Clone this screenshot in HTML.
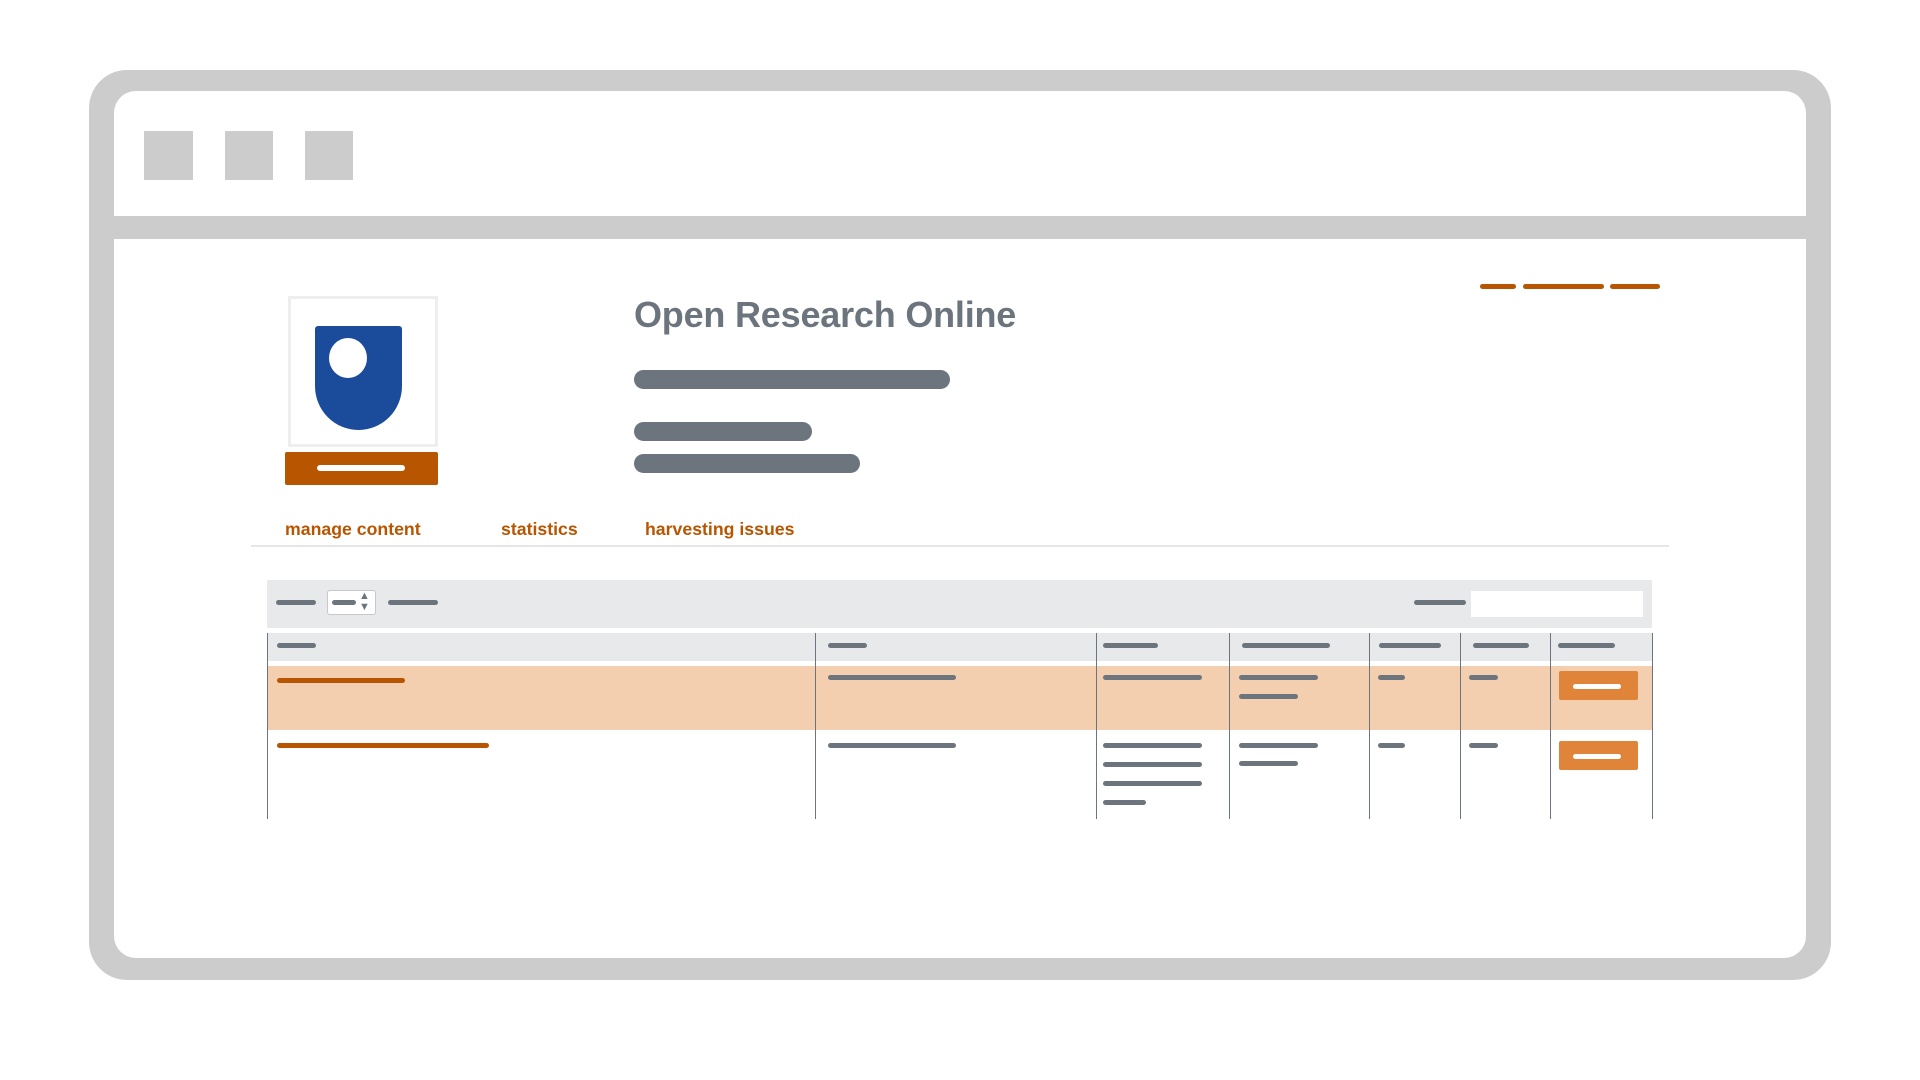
<!DOCTYPE html>
<html><head><meta charset="utf-8"><style>
*{margin:0;padding:0;box-sizing:border-box}
body{width:1920px;height:1080px;background:#fff;position:relative;overflow:hidden;font-family:"Liberation Sans",Arial,sans-serif}
.a{position:absolute}
.d{position:absolute;height:5px;border-radius:3px;background:#6c757d}
.o{background:#b85500}
.v{position:absolute;width:1px;background:#6c757d;top:633px;height:186px}
</style></head><body>
<div class="a" style="left:89px;top:70px;width:1742px;height:910px;background:#cccccc;border-radius:38px"></div>
<div class="a" style="left:114px;top:91px;width:1692px;height:867px;background:#fff;border-radius:22px"></div>
<div class="a" style="left:114px;top:216px;width:1692px;height:23px;background:#cccccc"></div>
<div class="a" style="left:144px;top:131px;width:49px;height:49px;background:#cccccc"></div>
<div class="a" style="left:225px;top:131px;width:48px;height:49px;background:#cccccc"></div>
<div class="a" style="left:305px;top:131px;width:48px;height:49px;background:#cccccc"></div>

<div class="a" style="left:288px;top:296px;width:150px;height:151px;border:3px solid #eeeeee"></div>
<svg class="a" style="left:315px;top:326px" width="87" height="104" viewBox="0 0 87 104">
<path d="M3 0H84a3 3 0 0 1 3 3V60A43.5 44 0 0 1 0 60V3A3 3 0 0 1 3 0Z" fill="#1b4b9b"/>
<ellipse cx="33" cy="32" rx="19" ry="20" fill="#fff"/></svg>
<div class="a" style="left:285px;top:452px;width:153px;height:33px;background:#b85500;border-radius:2px"></div>
<div class="a" style="left:317px;top:465px;width:88px;height:6px;background:#fff;border-radius:3px"></div>

<div class="a" style="left:634px;top:294px;font-size:36px;font-weight:bold;color:#6c757d;white-space:nowrap;letter-spacing:-0.2px">Open Research Online</div>
<div class="a" style="left:634px;top:370px;width:316px;height:19px;background:#6c757d;border-radius:10px"></div>
<div class="a" style="left:634px;top:422px;width:178px;height:19px;background:#6c757d;border-radius:10px"></div>
<div class="a" style="left:634px;top:454px;width:226px;height:19px;background:#6c757d;border-radius:10px"></div>

<div class="d o" style="left:1480px;top:284px;width:36px"></div>
<div class="d o" style="left:1523px;top:284px;width:81px"></div>
<div class="d o" style="left:1610px;top:284px;width:50px"></div>

<div class="a" style="left:285px;top:519px;font-size:17.7px;font-weight:bold;color:#b85500">manage content</div>
<div class="a" style="left:501px;top:519px;font-size:17.7px;font-weight:bold;color:#b85500">statistics</div>
<div class="a" style="left:645px;top:519px;font-size:17.7px;font-weight:bold;color:#b85500">harvesting issues</div>
<div class="a" style="left:251px;top:545px;width:1418px;height:2px;background:#e5e5e5"></div>

<div class="a" style="left:267px;top:580px;width:1385px;height:48px;background:#e8e9eb"></div>
<div class="d" style="left:276px;top:600px;width:40px"></div>
<div class="a" style="left:327px;top:590px;width:49px;height:25px;background:#fff;border:1px solid #c8c8c8;border-radius:3px"></div>
<div class="d" style="left:332px;top:600px;width:24px"></div>
<div class="a" style="left:359px;top:591px;font-size:11px;color:#6c757d;line-height:11px">▲<br>▼</div>
<div class="d" style="left:388px;top:600px;width:50px"></div>
<div class="d" style="left:1414px;top:600px;width:52px"></div>
<div class="a" style="left:1471px;top:591px;width:172px;height:26px;background:#fff"></div>

<div class="a" style="left:267px;top:633px;width:1385px;height:28px;background:#e8e9eb"></div>
<div class="a" style="left:267px;top:666px;width:1385px;height:64px;background:#f3cfb0"></div>
<div class="v" style="left:267px"></div><div class="v" style="left:815px"></div><div class="v" style="left:1096px"></div><div class="v" style="left:1229px"></div><div class="v" style="left:1369px"></div><div class="v" style="left:1460px"></div><div class="v" style="left:1550px"></div><div class="v" style="left:1652px"></div>

<div class="d" style="left:277px;top:643px;width:39px"></div>
<div class="d" style="left:828px;top:643px;width:39px"></div>
<div class="d" style="left:1103px;top:643px;width:55px"></div>
<div class="d" style="left:1242px;top:643px;width:88px"></div>
<div class="d" style="left:1379px;top:643px;width:62px"></div>
<div class="d" style="left:1473px;top:643px;width:56px"></div>
<div class="d" style="left:1558px;top:643px;width:57px"></div>

<div class="d o" style="left:277px;top:678px;width:128px"></div>
<div class="d" style="left:828px;top:675px;width:128px"></div>
<div class="d" style="left:1103px;top:675px;width:99px"></div>
<div class="d" style="left:1239px;top:675px;width:79px"></div>
<div class="d" style="left:1239px;top:694px;width:59px"></div>
<div class="d" style="left:1378px;top:675px;width:27px"></div>
<div class="d" style="left:1469px;top:675px;width:29px"></div>
<div class="a" style="left:1559px;top:671px;width:79px;height:29px;background:#e0843a;border-radius:2px"></div>
<div class="a" style="left:1573px;top:684px;width:48px;height:5px;background:#fff;border-radius:3px"></div>

<div class="d o" style="left:277px;top:743px;width:212px"></div>
<div class="d" style="left:828px;top:743px;width:128px"></div>
<div class="d" style="left:1103px;top:743px;width:99px"></div>
<div class="d" style="left:1103px;top:762px;width:99px"></div>
<div class="d" style="left:1103px;top:781px;width:99px"></div>
<div class="d" style="left:1103px;top:800px;width:43px"></div>
<div class="d" style="left:1239px;top:743px;width:79px"></div>
<div class="d" style="left:1239px;top:761px;width:59px"></div>
<div class="d" style="left:1378px;top:743px;width:27px"></div>
<div class="d" style="left:1469px;top:743px;width:29px"></div>
<div class="a" style="left:1559px;top:741px;width:79px;height:29px;background:#e0843a;border-radius:2px"></div>
<div class="a" style="left:1573px;top:754px;width:48px;height:5px;background:#fff;border-radius:3px"></div>
</body></html>
